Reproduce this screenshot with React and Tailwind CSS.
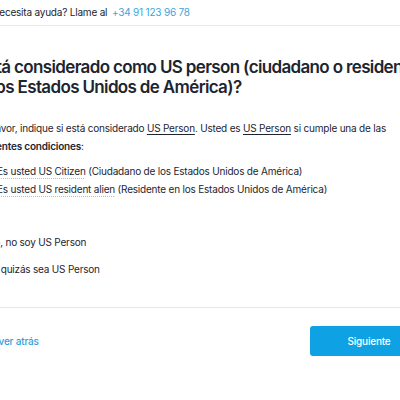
import React from 'react';

const Radio = ({ label }) => (
  <label className="flex items-center gap-3 h-[27px]">
    <span className="w-[14px] h-[14px] rounded-full border border-[#b9c2ca] bg-white" />
    <span>{label}</span>
  </label>
);

export default function App() {
  return (
    <div className="w-[400px] h-[400px] overflow-hidden bg-white text-[#1c2530] font-['Inter',sans-serif] text-[10px] tracking-[-0.2px]">
      <header className="h-[26px] border-b border-[#e6eaee] flex items-center">
        <div className="-ml-[13px] whitespace-nowrap">
          ¿Necesita ayuda? Llame al <a className="ml-[2px] text-[#39a6dd]">+34 91 123 96 78</a>
        </div>
      </header>

      <main>
        <h1 className="mt-[31px] -ml-[31px] text-[17px] leading-[20px] font-semibold tracking-[-0.65px] whitespace-nowrap">
          ¿Está considerado como US person (ciudadano o residente
          <br />
          en los Estados Unidos de América)?
        </h1>

        <div className="mt-[22px] -ml-[26px] leading-[18px] whitespace-nowrap">
          <p>
            Por favor, indique si está considerado <span className="underline underline-offset-2">US Person</span>. Usted es{' '}
            <span className="underline underline-offset-2">US Person</span> si cumple una de las
            <br />
            <strong className="font-semibold">siguientes condiciones</strong>:
          </p>
          <ul className="mt-[7px] pl-[23px]">
            <li>
              <span className="underline decoration-dotted decoration-[#8ccbe8] underline-offset-[3px]">Es usted US Citizen</span> (Ciudadano de los Estados Unidos de América)
            </li>
            <li>
              <span className="underline decoration-dotted decoration-[#8ccbe8] underline-offset-[3px]">Es usted US resident alien</span> (Residente en los Estados Unidos de América)
            </li>
          </ul>
        </div>

        <div className="mt-[31px] -ml-[39px]">
          <Radio label="No, no soy US Person" />
          <Radio label="Sí, quizás sea US Person" />
        </div>
      </main>

      <div className="mt-[24px] border-t border-[#e3e8ec]" />

      <footer className="flex items-center justify-between pt-[18px]">
        <a className="-ml-[16px] font-medium text-[#2f9fd8]">Volver atrás</a>
        <button className="w-[118px] h-[30px] -mr-[28px] rounded-[3px] bg-[#0ea1e4] text-white font-medium">
          Siguiente
        </button>
      </footer>
    </div>
  );
}
